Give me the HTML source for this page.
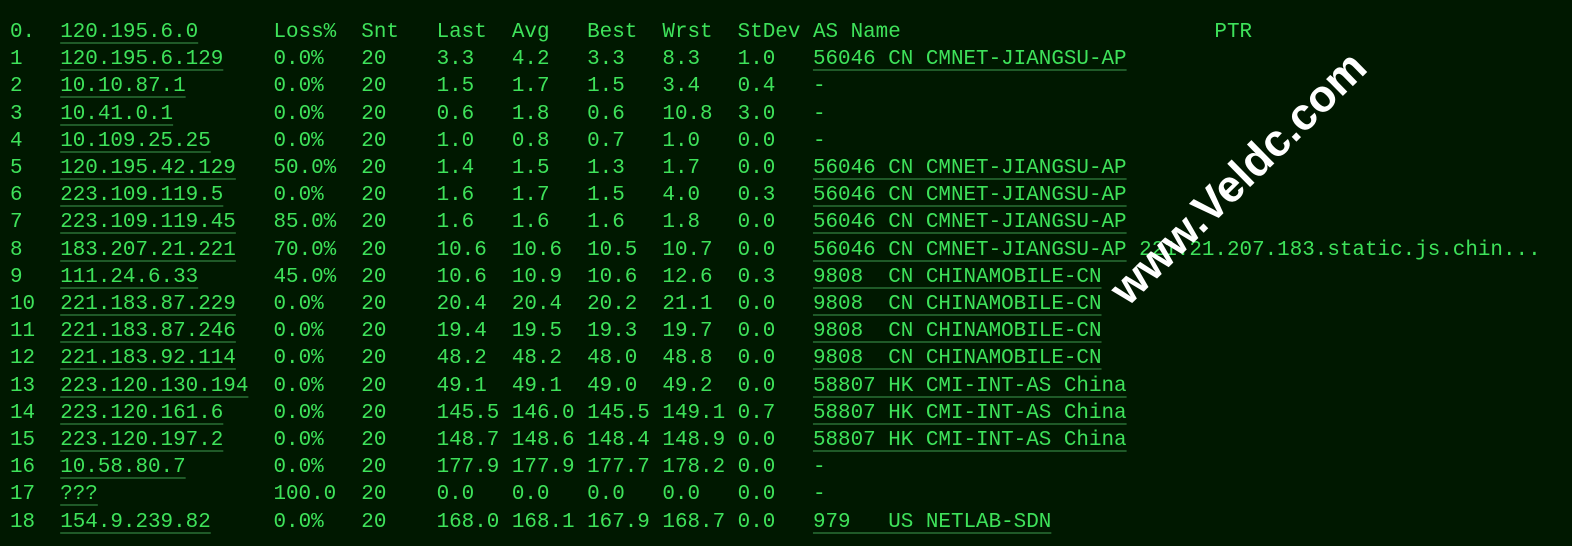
<!DOCTYPE html>
<html><head><meta charset="utf-8"><style>
html,body{margin:0;padding:0;background:#001800;width:1572px;height:546px;overflow:hidden}
pre{position:absolute;left:10px;top:19px;margin:0;font-family:"Liberation Mono",monospace;font-size:20.92px;line-height:27.2px;color:#3ee25a;}
u{text-decoration:underline;text-decoration-color:#1f5a28;text-decoration-thickness:2px;text-underline-offset:5px}
.wm{position:absolute;left:1238px;top:178px;transform:translate(-50%,-50%) rotate(-44.5deg);font-family:"Liberation Sans",sans-serif;font-weight:bold;font-size:45px;color:#fff;white-space:nowrap}
</style></head><body>
<pre>0.  <u>120.195.6.0</u>      Loss%  Snt   Last  Avg   Best  Wrst  StDev AS Name                         PTR
1   <u>120.195.6.129</u>    0.0%   20    3.3   4.2   3.3   8.3   1.0   <u>56046 CN CMNET-JIANGSU-AP</u>
2   <u>10.10.87.1</u>       0.0%   20    1.5   1.7   1.5   3.4   0.4   -
3   <u>10.41.0.1</u>        0.0%   20    0.6   1.8   0.6   10.8  3.0   -
4   <u>10.109.25.25</u>     0.0%   20    1.0   0.8   0.7   1.0   0.0   -
5   <u>120.195.42.129</u>   50.0%  20    1.4   1.5   1.3   1.7   0.0   <u>56046 CN CMNET-JIANGSU-AP</u>
6   <u>223.109.119.5</u>    0.0%   20    1.6   1.7   1.5   4.0   0.3   <u>56046 CN CMNET-JIANGSU-AP</u>
7   <u>223.109.119.45</u>   85.0%  20    1.6   1.6   1.6   1.8   0.0   <u>56046 CN CMNET-JIANGSU-AP</u>
8   <u>183.207.21.221</u>   70.0%  20    10.6  10.6  10.5  10.7  0.0   <u>56046 CN CMNET-JIANGSU-AP</u> 221.21.207.183.static.js.chin...
9   <u>111.24.6.33</u>      45.0%  20    10.6  10.9  10.6  12.6  0.3   <u>9808  CN CHINAMOBILE-CN</u>
10  <u>221.183.87.229</u>   0.0%   20    20.4  20.4  20.2  21.1  0.0   <u>9808  CN CHINAMOBILE-CN</u>
11  <u>221.183.87.246</u>   0.0%   20    19.4  19.5  19.3  19.7  0.0   <u>9808  CN CHINAMOBILE-CN</u>
12  <u>221.183.92.114</u>   0.0%   20    48.2  48.2  48.0  48.8  0.0   <u>9808  CN CHINAMOBILE-CN</u>
13  <u>223.120.130.194</u>  0.0%   20    49.1  49.1  49.0  49.2  0.0   <u>58807 HK CMI-INT-AS China</u>
14  <u>223.120.161.6</u>    0.0%   20    145.5 146.0 145.5 149.1 0.7   <u>58807 HK CMI-INT-AS China</u>
15  <u>223.120.197.2</u>    0.0%   20    148.7 148.6 148.4 148.9 0.0   <u>58807 HK CMI-INT-AS China</u>
16  <u>10.58.80.7</u>       0.0%   20    177.9 177.9 177.7 178.2 0.0   -
17  <u>???</u>              100.0  20    0.0   0.0   0.0   0.0   0.0   -
18  <u>154.9.239.82</u>     0.0%   20    168.0 168.1 167.9 168.7 0.0   <u>979   US NETLAB-SDN</u></pre>
<div class="wm">www.Veldc.com</div>
</body></html>
